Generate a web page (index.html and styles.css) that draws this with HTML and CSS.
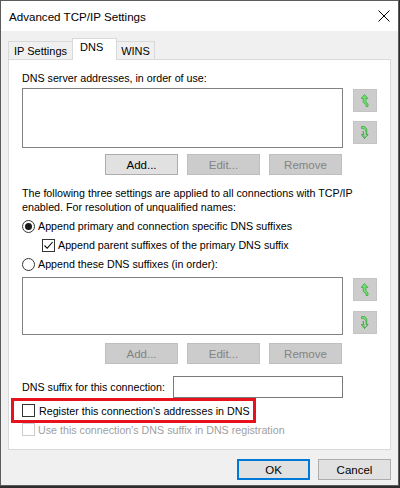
FILE: index.html
```html
<!DOCTYPE html>
<html lang="en">
<head>
    <meta charset="UTF-8">
    <title>Advanced TCP/IP Settings</title>
    <link rel="stylesheet" href="styles.css">
</head>
<body>
    <div class="window">
        <div class="titlebar">
            <span class="title">Advanced TCP/IP Settings</span>
            <svg class="close" width="12" height="12" viewBox="0 0 12 12">
                <path d="M0.5 0.5 L11.5 11.5 M11.5 0.5 L0.5 11.5" stroke="#000" stroke-width="1" fill="none"/>
            </svg>
        </div>

        <div class="main">
            <div class="tabs">
                <div class="tab tab-ip">IP Settings</div>
                <div class="tab tab-dns active">DNS</div>
                <div class="tab tab-wins">WINS</div>
            </div>

            <div class="panel">
                <div class="line">DNS server addresses, in order of use:</div>
                <div class="list-row">
                    <div class="listbox"></div>
                    <div class="arrows">
                        <div class="arrow-btn">
                            <svg width="8" height="13" viewBox="0 0 8 13">
                                <path d="M3.5 0.5 L7 4.5 L5 4.5 L5 8 L7 10 L7 12.5 L5 12.5 L5 10.8 L2.2 8.4 L2.2 4.5 L0 4.5 Z" fill="#6fdc6f" stroke="#3aa83a" stroke-width="0.7"/>
                            </svg>
                        </div>
                        <div class="arrow-btn">
                            <svg width="8" height="13" viewBox="0 0 8 13">
                                <path d="M3.5 12.5 L7 8.5 L5 8.5 L5 5 L3 2.6 L0.5 2.6 L0.5 0.5 L3.8 0.5 L5.8 3 L5.8 8.5 L7 8.5 Z M3.5 12.5 L0 8.5 L2.2 8.5 L2.2 5 Z" fill="#6fdc6f" stroke="#3aa83a" stroke-width="0.7"/>
                            </svg>
                        </div>
                    </div>
                </div>
                <div class="btn-row">
                    <div class="btn">Add...</div>
                    <div class="btn disabled">Edit...</div>
                    <div class="btn disabled">Remove</div>
                </div>

                <p class="info">The following three settings are applied to all connections with TCP/IP enabled. For resolution of unqualified names:</p>

                <div class="option option-first">
                    <span class="radio checked"></span>
                    <span>Append primary and connection specific DNS suffixes</span>
                </div>
                <div class="option option-sub">
                    <span class="check">
                        <svg width="11" height="11" viewBox="0 0 11 11">
                            <path d="M1.5 5.5 L4.2 8.3 L9.6 2" stroke="#000" stroke-width="1.1" fill="none"/>
                        </svg>
                    </span>
                    <span>Append parent suffixes of the primary DNS suffix</span>
                </div>
                <div class="option">
                    <span class="radio"></span>
                    <span>Append these DNS suffixes (in order):</span>
                </div>

                <div class="list-row list-row-second">
                    <div class="listbox listbox-short"></div>
                    <div class="arrows">
                        <div class="arrow-btn">
                            <svg width="8" height="13" viewBox="0 0 8 13">
                                <path d="M3.5 0.5 L7 4.5 L5 4.5 L5 8 L7 10 L7 12.5 L5 12.5 L5 10.8 L2.2 8.4 L2.2 4.5 L0 4.5 Z" fill="#6fdc6f" stroke="#3aa83a" stroke-width="0.7"/>
                            </svg>
                        </div>
                        <div class="arrow-btn">
                            <svg width="8" height="13" viewBox="0 0 8 13">
                                <path d="M3.5 12.5 L7 8.5 L5 8.5 L5 5 L3 2.6 L0.5 2.6 L0.5 0.5 L3.8 0.5 L5.8 3 L5.8 8.5 L7 8.5 Z M3.5 12.5 L0 8.5 L2.2 8.5 L2.2 5 Z" fill="#6fdc6f" stroke="#3aa83a" stroke-width="0.7"/>
                            </svg>
                        </div>
                    </div>
                </div>
                <div class="btn-row btn-row-second">
                    <div class="btn disabled">Add...</div>
                    <div class="btn disabled">Edit...</div>
                    <div class="btn disabled">Remove</div>
                </div>

                <div class="suffix-row">
                    <span>DNS suffix for this connection:</span>
                    <div class="textbox"></div>
                </div>

                <div class="highlight">
                    <span class="check"></span>
                    <span>Register this connection's addresses in DNS</span>
                </div>
                <div class="option option-off">
                    <span class="check check-off"></span>
                    <span>Use this connection's DNS suffix in DNS registration</span>
                </div>
            </div>

            <div class="footer">
                <div class="btn btn-default">OK</div>
                <div class="btn">Cancel</div>
            </div>
        </div>
    </div>
</body>
</html>
```

FILE: styles.css
```css
body {
    margin: 0;
    padding: 0;
    background: #2e2e2e;
    font-family: "Liberation Sans", Arial, sans-serif;
    font-size: 10.7px;
    color: #000;
}

.window {
    width: 397px;
    height: 484px;
    border: 1px solid #5c5c5c;
    background: #f0f0f0;
}

.titlebar {
    height: 30px;
    background: #fff;
    display: flex;
    align-items: center;
    justify-content: space-between;
    padding: 0 8px 0 8px;
}

.title {
    font-size: 11.6px;
}

.close {
    display: block;
}

.main {
    padding: 7px 7px 0 7px;
}

.tabs {
    display: flex;
    align-items: flex-end;
    height: 21px;
    font-size: 11px;
}

.tab {
    height: 18px;
    line-height: 18px;
    box-sizing: border-box;
    border: 1px solid #d9d9d9;
    border-bottom: none;
    background: #f0f0f0;
    text-align: center;
}

.tab-ip {
    width: 64px;
    border-right: none;
}

.tab-dns {
    width: 45px;
}

.tab-wins {
    width: 38px;
    border-left: none;
}

.tab.active {
    height: 22px;
    line-height: 16px;
    background: #fff;
    margin-bottom: -1px;
    position: relative;
    text-align: left;
    padding-left: 7px;
}

.panel {
    height: 378px;
    border: 1px solid #d9d9d9;
    background: #fff;
    padding: 11px 13px 0 13px;
}

.line {
    line-height: 15px;
    height: 15px;
}

.list-row {
    display: flex;
    margin-top: 2px;
}

.listbox {
    width: 320px;
    height: 58px;
    border: 1px solid #828282;
    background: #fff;
}

.listbox-short {
    height: 56px;
}

.arrows {
    display: flex;
    flex-direction: column;
    gap: 9px;
    margin-left: 10px;
    padding-top: 1px;
}

.arrow-btn {
    width: 24px;
    height: 23px;
    background: #cccccc;
    border: 1px solid #c4c4c4;
    box-sizing: border-box;
    display: flex;
    align-items: center;
    justify-content: center;
}

.list-row-second {
    margin-top: 6px;
}

.list-row-second .arrows {
    gap: 10px;
}

.btn-row {
    width: 320px;
    display: flex;
    justify-content: flex-end;
    gap: 9px;
    margin-top: 6px;
}

.btn-row-second {
    margin-top: 8px;
}

.btn {
    width: 73px;
    height: 21px;
    box-sizing: border-box;
    border: 1px solid #adadad;
    background: #e1e1e1;
    display: flex;
    align-items: center;
    justify-content: center;
    font-size: 11.5px;
}

.btn.disabled {
    background: #cccccc;
    border-color: #bfbfbf;
    color: #838383;
}

.info {
    margin: 11px 0 0 0;
    line-height: 14px;
    width: 340px;
}

.option {
    display: flex;
    align-items: center;
    height: 14px;
    margin-top: 5px;
}

.option-sub {
    padding-left: 20px;
}

.radio {
    width: 13px;
    height: 13px;
    box-sizing: border-box;
    border: 1px solid #333;
    border-radius: 50%;
    margin-right: 3px;
    display: flex;
    align-items: center;
    justify-content: center;
    background: #fff;
}

.radio.checked::after {
    content: "";
    width: 7px;
    height: 7px;
    border-radius: 50%;
    background: #1a1a1a;
}

.check {
    width: 13px;
    height: 13px;
    box-sizing: border-box;
    border: 1px solid #333;
    background: #fff;
    margin-right: 3px;
    display: flex;
    align-items: center;
    justify-content: center;
}

.check-off {
    border-color: #cccccc;
}

.suffix-row {
    display: flex;
    align-items: center;
    justify-content: space-between;
    width: 321px;
    margin-top: 12px;
}

.textbox {
    width: 170px;
    height: 22px;
    box-sizing: border-box;
    border: 1px solid #7a7a7a;
    background: #fff;
}

.highlight {
    display: inline-flex;
    align-items: center;
    height: 19px;
    border: 3px solid #e8121f;
    margin-left: -11px;
    padding: 0 3px 0 8px;
}

.highlight .check {
    margin-right: 4px;
}

.option-off {
    margin-top: 0;
    height: 13px;
    color: #a0a0a0;
}

.footer {
    display: flex;
    justify-content: flex-end;
    gap: 8px;
    margin-top: 9px;
}

.btn-default {
    border: 2px solid #0078d7;
}
```
